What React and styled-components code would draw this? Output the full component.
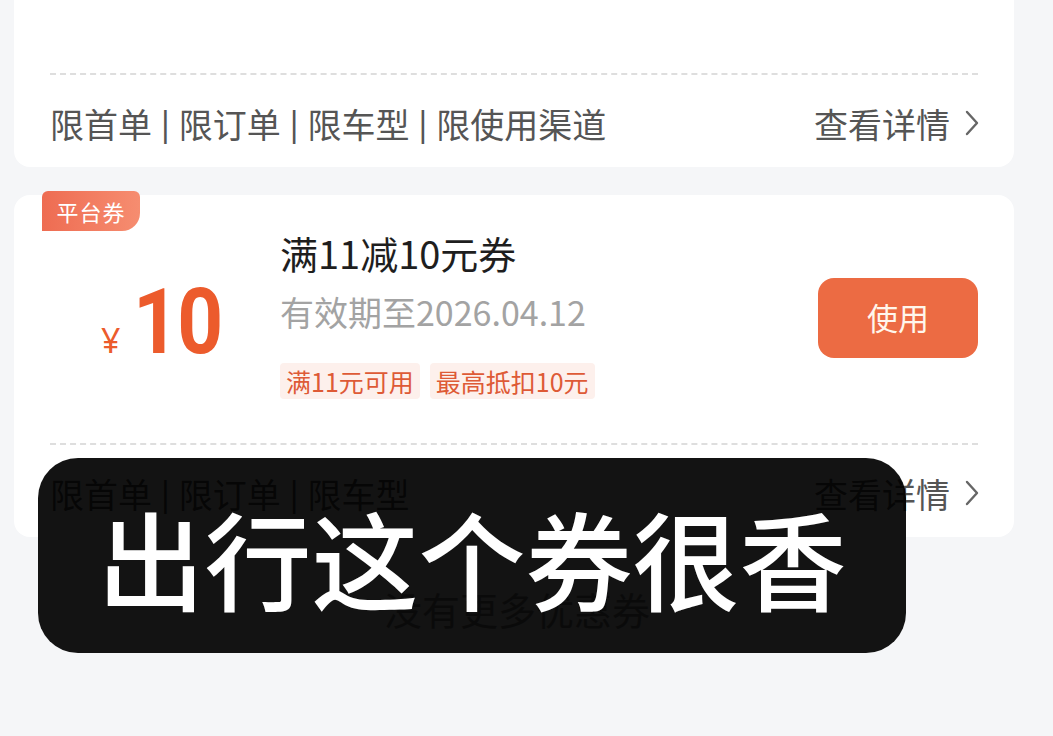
import React from "react";
import styled, { createGlobalStyle } from "styled-components";

const GlobalStyle = createGlobalStyle`
  html, body {
    margin: 0;
    padding: 0;
    background: #f5f6f8;
    overflow: hidden;
  }
  body {
    font-family: "Noto Sans CJK SC", "Noto Sans", sans-serif;
  }
`;

const coupons = [
  { id: 1, hidden: true, limits: ["限首单", "限订单", "限车型", "限使用渠道"] },
  {
    id: 2,
    tag: "平台券",
    amount: 10,
    title: "满11减10元券",
    expire: "有效期至2026.04.12",
    chips: ["满11元可用", "最高抵扣10元"],
    limits: ["限首单", "限订单", "限车型"],
  },
];

const Chevron = () => (
  <svg width="16" height="28" viewBox="0 0 16 28">
    <polyline
      points="3,3 13,14 3,25"
      fill="none"
      stroke="#666"
      strokeWidth="2.4"
      strokeLinecap="round"
      strokeLinejoin="round"
    />
  </svg>
);

const App = () => {
  return (
    <Page>
      <GlobalStyle />
      {coupons.map((c) => (
        <Card key={c.id} $first={c.hidden}>
          {c.tag && <Tag>{c.tag}</Tag>}
          <Main $first={c.hidden}>
            {!c.hidden && (
              <>
                <Price>
                  <Yen>¥</Yen>
                  <Amount>{c.amount}</Amount>
                </Price>
                <Info>
                  <Title>{c.title}</Title>
                  <Expire>{c.expire}</Expire>
                  <Chips>
                    {c.chips.map((ch) => (
                      <Chip key={ch}>{ch}</Chip>
                    ))}
                  </Chips>
                </Info>
                <UseButton>使用</UseButton>
              </>
            )}
          </Main>
          <Footer>
            <Limits>
              {c.limits.map((l, i) => (
                <React.Fragment key={l}>
                  {i > 0 && <Sep>|</Sep>}
                  {l}
                </React.Fragment>
              ))}
            </Limits>
            <Detail>
              查看详情
              <Chevron />
            </Detail>
          </Footer>
        </Card>
      ))}
      <NoMore>没有更多优惠券</NoMore>
      <Caption>出行这个券很香</Caption>
    </Page>
  );
};

const Page = styled.div`
  position: relative;
  height: 736px;
  padding: 0 39px 0 14px;
  display: flex;
  flex-direction: column;
  gap: 28px;
`;

const Card = styled.section`
  position: relative;
  background: #fff;
  border-radius: 16px;
  padding: 0 36px;
  margin-top: ${(p) => (p.$first ? "-100px" : "0")};
`;

const Tag = styled.div`
  position: absolute;
  top: -4px;
  left: 28px;
  width: 98px;
  height: 40px;
  display: flex;
  align-items: center;
  justify-content: center;
  border-radius: 6px 6px 18px 0;
  background: linear-gradient(90deg, #ee6c52, #f68d70);
  color: #fff;
  font-size: 22px;
  letter-spacing: 1px;
`;

const Main = styled.div`
  height: ${(p) => (p.$first ? "175px" : "250px")};
  display: grid;
  grid-template-columns: 220px 1fr 160px;
  align-items: center;
  gap: 10px;
  box-sizing: border-box;
  border-bottom: 2px dashed #dedede;
`;

const Price = styled.div`
  display: flex;
  align-items: baseline;
  justify-content: center;
  color: #ec5b2c;
  margin-left: 2px;
  padding-top: 6px;
`;

const Yen = styled.span`
  font-size: 34px;
  font-family: "Noto Sans", sans-serif;
`;

const Amount = styled.span`
  display: inline-block;
  font-family: "Roboto", sans-serif;
  font-weight: 700;
  font-size: 91px;
  line-height: 1;
  letter-spacing: -2px;
  transform: scaleX(0.88);
  transform-origin: right center;
`;

const Info = styled.div`
  align-self: start;
  display: flex;
  flex-direction: column;
  align-items: flex-start;
  padding-top: 30px;
`;

const Title = styled.div`
  font-size: 38px;
  line-height: 56px;
  color: #1e1e1e;
`;

const Expire = styled.div`
  font-size: 34px;
  line-height: 62px;
  color: #a3a3a3;
`;

const Chips = styled.div`
  display: flex;
  gap: 10px;
  margin-top: 20px;
`;

const Chip = styled.span`
  background: #fdf0ec;
  color: #de5a36;
  font-size: 25px;
  line-height: 36px;
  padding: 0 6px;
  border-radius: 4px;
`;

const UseButton = styled.button`
  width: 160px;
  height: 80px;
  border: none;
  border-radius: 16px;
  background: #ec6b43;
  color: #fff6ec;
  font-family: "Noto Sans CJK SC", sans-serif;
  font-size: 31px;
  margin-top: -2px;
  padding: 0 0 4px;
`;

const Footer = styled.div`
  height: 92px;
  display: flex;
  align-items: center;
  justify-content: space-between;
  padding-top: 4px;
  box-sizing: border-box;
  color: #555;
  font-size: 34px;
`;

const Limits = styled.div`
  display: flex;
  align-items: center;
`;

const Sep = styled.span`
  margin: 0 4px;
  font-family: "Noto Sans", sans-serif;
`;

const Detail = styled.div`
  display: flex;
  align-items: center;
  gap: 14px;
  margin-right: -2px;
`;

const NoMore = styled.div`
  text-align: center;
  margin: 16px 0 0 6px;
  color: #8a8a8a;
  font-size: 38px;
`;

const Caption = styled.div`
  position: absolute;
  left: 38px;
  top: 458px;
  width: 868px;
  height: 195px;
  border-radius: 40px;
  background: rgba(0, 0, 0, 0.925);
  color: #fff;
  display: flex;
  align-items: center;
  justify-content: center;
  font-size: 107px;
  font-weight: 500;
  padding-top: 2px;
  box-sizing: border-box;
`;

export default App;
